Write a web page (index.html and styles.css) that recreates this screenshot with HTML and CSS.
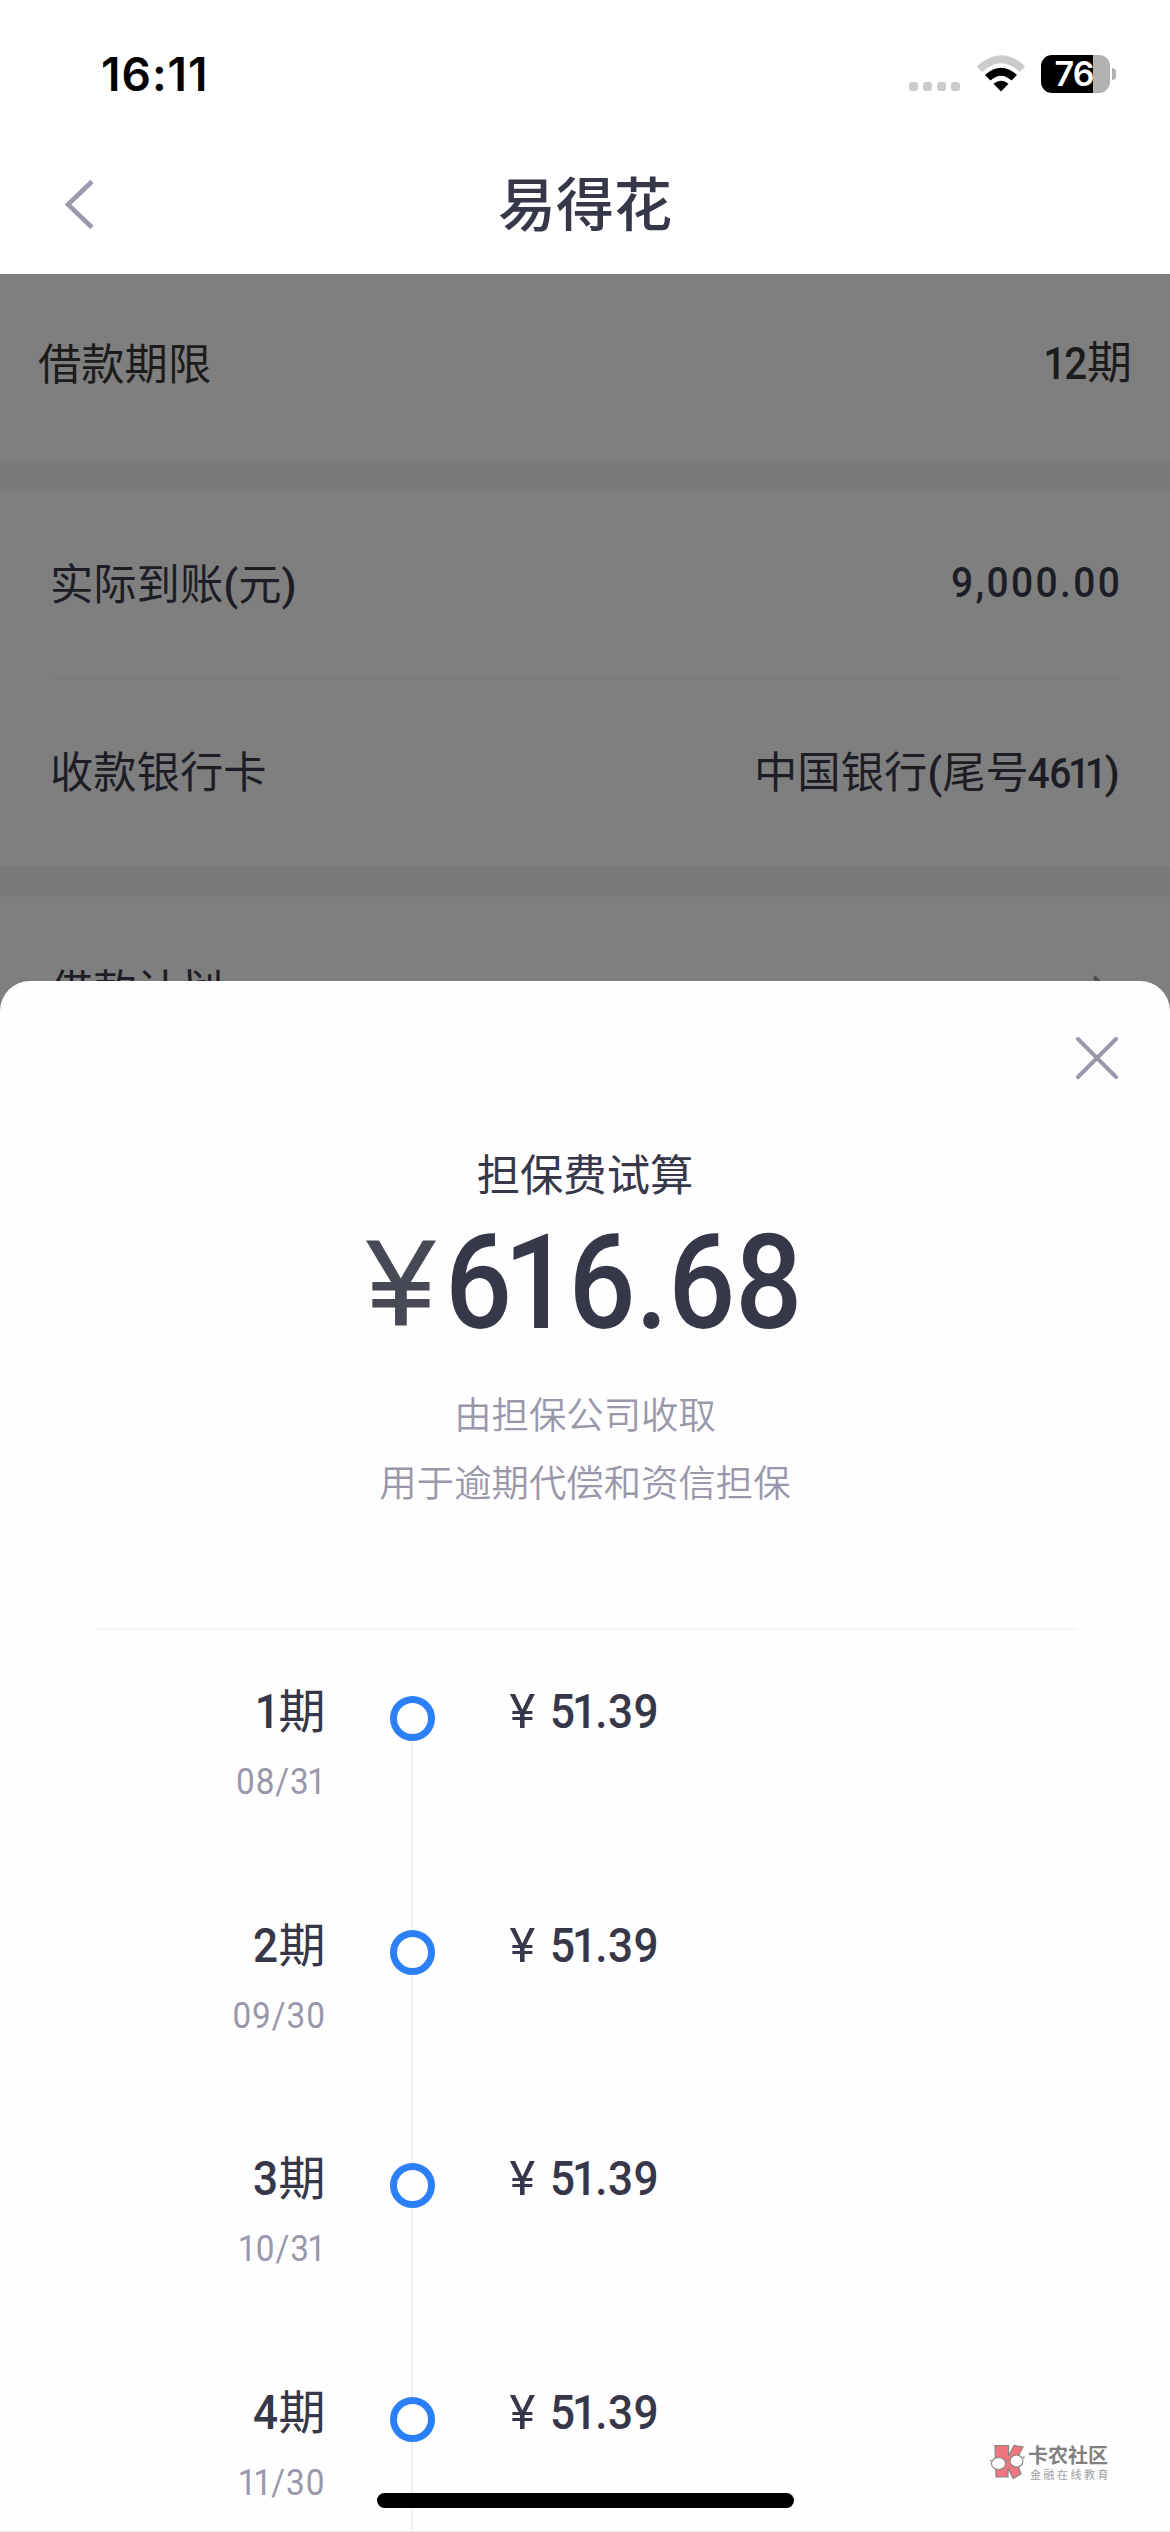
FILE: index.html
```html
<!DOCTYPE html>
<html lang="zh-CN">
<head>
<meta charset="utf-8">
<title>易得花</title>
<link rel="stylesheet" href="styles.css">
</head>
<body>
<div class="screen">
  <header class="top">
    <div class="status">
      <span class="clock">16:11</span>
      <div class="indicators">
        <div class="signal"><i></i><i></i><i></i><i></i></div>
        <svg class="wifi" width="50" height="38" viewBox="0 0 50 38">
          <path d="M0.8 11.5Q25-11 49.2 11.5L43.8 17Q25-.5 6.2 17Z" fill="#cbcbcb"/>
          <path d="M9 20Q25 5.500 41 20L35.500 25.500Q25 16 14.500 25.500Z" fill="#000"/>
          <path d="M17.500 28.800Q25 22.500 32.500 28.800L25 36.500Z" fill="#000"/>
        </svg>
        <div class="battery"><span class="level">76</span></div>
        <i class="nub"></i>
      </div>
    </div>
    <nav class="nav">
      <svg class="back" width="34" height="52" viewBox="0 0 34 52"><path d="M32 3.500L8 26.500L32 49.500" fill="none" stroke="#9c99ae" stroke-width="4.600"/></svg>
      <h1 class="title">易得花</h1>
      <span class="nav-end"></span>
    </nav>
  </header>

  <main class="page">
    <section class="term row"><span>借款期限</span><span class="term-value"><span class="num"><b>1</b>2</span>期</span></section>
    <section class="group">
      <div class="row"><span>实际到账<em>(</em>元<em>)</em></span><span class="num money">9,000.00</span></div>
      <div class="row ruled"><span>收款银行卡</span><span class="bank">中国银行<em>(</em>尾号<span class="num tail">46<b>1</b><b>1</b></span><em>)</em></span></div>
    </section>
    <section class="group">
      <div class="row"><span>借款计划</span><svg class="more" width="28" height="40" viewBox="0 0 28 40"><path d="M2 2L20 20L2 38" fill="none" stroke="#4e4d58" stroke-width="4"/></svg></div>
    </section>
  </main>

  <section class="sheet">
    <svg class="close" width="46" height="46" viewBox="0 0 46 46"><path d="M4 4L42 42M42 4L4 42" fill="none" stroke="#9997ab" stroke-width="4" stroke-linecap="round"/></svg>
    <h2 class="caption">担保费试算</h2>
    <p class="total"><span class="yen">¥</span><span class="num sum">6<b>1</b>6.68</span></p>
    <p class="note">由担保公司收取<br>用于逾期代偿和资信担保</p>
    <ol class="plan">
      <li class="item"><div class="when"><p class="no"><span class="num"><b>1</b></span>期</p><p class="date num">08/3<b>1</b></p></div><div class="axis"><i></i></div><p class="fee"><span class="mark">¥</span><span class="num">5<b>1</b>.39</span></p></li>
      <li class="item"><div class="when"><p class="no"><span class="num">2</span>期</p><p class="date num">09/30</p></div><div class="axis"><i></i></div><p class="fee"><span class="mark">¥</span><span class="num">5<b>1</b>.39</span></p></li>
      <li class="item"><div class="when"><p class="no"><span class="num">3</span>期</p><p class="date num"><b>1</b>0/3<b>1</b></p></div><div class="axis"><i></i></div><p class="fee"><span class="mark">¥</span><span class="num">5<b>1</b>.39</span></p></li>
      <li class="item"><div class="when"><p class="no"><span class="num">4</span>期</p><p class="date num"><b>1</b><b>1</b>/30</p></div><div class="axis"><i></i></div><p class="fee"><span class="mark">¥</span><span class="num">5<b>1</b>.39</span></p></li>
    </ol>
  </section>

  <div class="badge">
    <svg width="36" height="38" viewBox="0 0 36 38">
      <path d="M5 2.500H18.500V13L24 2.500L33 4L26 17L31 31L23 35.500L18 25V34H6Z" fill="#f1757e" stroke="#8a8583" stroke-width="1.200"/>
      <ellipse cx="8.500" cy="20.500" rx="7" ry="6" fill="#fff" stroke="#8a8583" stroke-width="1.100"/>
      <ellipse cx="26.500" cy="18" rx="6.500" ry="6" fill="#fff" stroke="#8a8583" stroke-width="1.100"/>
      <path d="M15 18.500L20.500 16.500M1.500 18L0 17M33 15L34.500 13.500" stroke="#8a8583" stroke-width="1.200"/>
    </svg>
    <div class="badge-text"><strong>卡农社区</strong><small>金融在线教育</small></div>
  </div>
  <div class="home"></div>
</div>
</body>
</html>
```
FILE: styles.css
```css
* { box-sizing: border-box; margin: 0; padding: 0; }
body { background: #fff; font-family: Roboto, "Noto Sans CJK SC", sans-serif; color: #363749; }
i, em { font-style: normal; }
.screen { position: relative; width: 1170px; height: 2532px; overflow: hidden; background: #fff; }

/* status bar and title */
.top { height: 274px; background: #fff; }
.status { height: 148px; padding: 0 54px 0 101px; display: flex; align-items: center; justify-content: space-between; }
.clock { font: 600 46px/60px Inter, sans-serif; color: #000; letter-spacing: 1px; }
.indicators { display: flex; align-items: center; }
.signal { display: flex; gap: 5px; margin: 25px 16px 0 0; }
.signal i { width: 9px; height: 9px; border-radius: 3px; background: #cbcbcb; }
.battery { width: 69px; height: 38px; margin-left: 15px; padding-right: 3px; border-radius: 11px; background: linear-gradient(90deg, #000 52px, #b1b1b1 52px); color: #fff; text-align: center; }
.level { font: 600 34px/38px Inter, sans-serif; letter-spacing: -1px; }
.nub { width: 4px; height: 12px; margin-left: 2px; border-radius: 0 4px 4px 0; background: #b1b1b1; }
.nav { height: 112px; padding: 0 60px; display: flex; align-items: center; justify-content: space-between; }
.title { padding-bottom: 6px; font: 500 58px/84px "Noto Sans CJK SC", sans-serif; color: #363749; }
.nav-end { width: 34px; }

/* narrow figures */
.num { display: inline-block; font-family: Roboto, sans-serif; font-weight: 500; transform: scaleX(.9); transform-origin: right; letter-spacing: .02em; }
.num b { font-weight: inherit; margin: 0 -.05em 0 -.08em; }

/* dimmed page */
.page { height: 2258px; background: #7a7a7a; color: #1d1d26; font-size: 43.300px; display: flex; flex-direction: column; gap: 31px; }
.row { height: 187.500px; background: #7f7f7f; padding: 0 50px 8px; display: flex; align-items: center; justify-content: space-between; }
.term { height: 186px; padding: 0 38px 13px; color: #1c1c1c; border-top: 1px solid #787878; }
.term-value { font-size: 45px; padding-bottom: 3px; }
.term-value .num { letter-spacing: 0; }
.money { letter-spacing: .06em; margin-right: -.05em; padding-top: 3px; }
.tail { letter-spacing: -.01em; margin-left: -.22em; }
.group { background: #7f7f7f; }
.ruled { border-top: 1px solid #797979; margin: 0 50px; padding: 0 0 8px; }
.row em { font-weight: 500; }
.more { margin-top: 16px; }

/* bottom sheet */
.sheet { position: absolute; left: 0; right: 0; top: 981px; bottom: 0; overflow: hidden; background: #fefefe; border-radius: 30px 30px 0 0; border-bottom: 1px solid #e8e8e8; display: flex; flex-direction: column; align-items: center; }
.sheet > * { flex-shrink: 0; }
.close { align-self: flex-end; margin: 54px 50px 0 0; }
.caption { margin-top: 59px; font: 400 43.300px/64px "Noto Sans CJK SC", sans-serif; }
.total { height: 142px; margin-top: 8px; display: flex; justify-content: center; gap: 10px; line-height: 142px; }
.yen { font: 400 122px/142px "Liberation Sans", sans-serif; color: #484956; -webkit-text-stroke: 1px #484956; }
.sum { font-size: 131px; letter-spacing: 0; transform-origin: left; margin-right: -39px; }
.sum b { margin: 0 -.02em 0 -.07em; }
.note { margin-top: 25px; font: 350 37.400px/68px "Noto Sans CJK SC", sans-serif; color: #9998ab; text-align: center; }
.plan { width: 983px; margin-top: 113px; border-top: 2px solid #f5f5f5; list-style: none; padding-top: 32px; }
.item { height: 233.500px; display: flex; }
.when { width: 232px; padding-top: 12px; text-align: right; }
.no { font-size: 47px; line-height: 76px; }
.no .num { font-size: 49px; }
.date { margin-top: 1px; font-size: 37px; line-height: 62px; font-weight: 400; letter-spacing: .03em; color: #9998ab; }
.axis { width: 45px; margin-left: 64px; padding-top: 34px; background: linear-gradient(#f1f1f1, #f1f1f1) center / 2px 100% no-repeat; }
.item:first-child .axis { background-position: center 40px; }
.axis i { display: block; width: 45px; height: 45px; border: 7px solid #2c80f7; border-radius: 50%; background: #fefefe; }
.fee { margin-left: 75px; padding-top: 12px; font-size: 49px; line-height: 76px; display: flex; }
.fee .num { transform-origin: left; letter-spacing: .01em; }
.mark { width: 40px; font-weight: 400; }

.badge { position: absolute; left: 990px; top: 2443px; display: flex; gap: 2px; }
.badge-text { display: flex; flex-direction: column; font-family: "Noto Sans CJK SC", sans-serif; }
.badge-text strong { font-size: 20px; line-height: 24px; font-weight: 700; color: #818181; }
.badge-text small { font-size: 11px; line-height: 14px; letter-spacing: 2.500px; padding-left: 2px; color: #a0a0a0; }
.home { position: absolute; left: 377px; top: 2493px; width: 417px; height: 15px; border-radius: 8px; background: #000; }
```
